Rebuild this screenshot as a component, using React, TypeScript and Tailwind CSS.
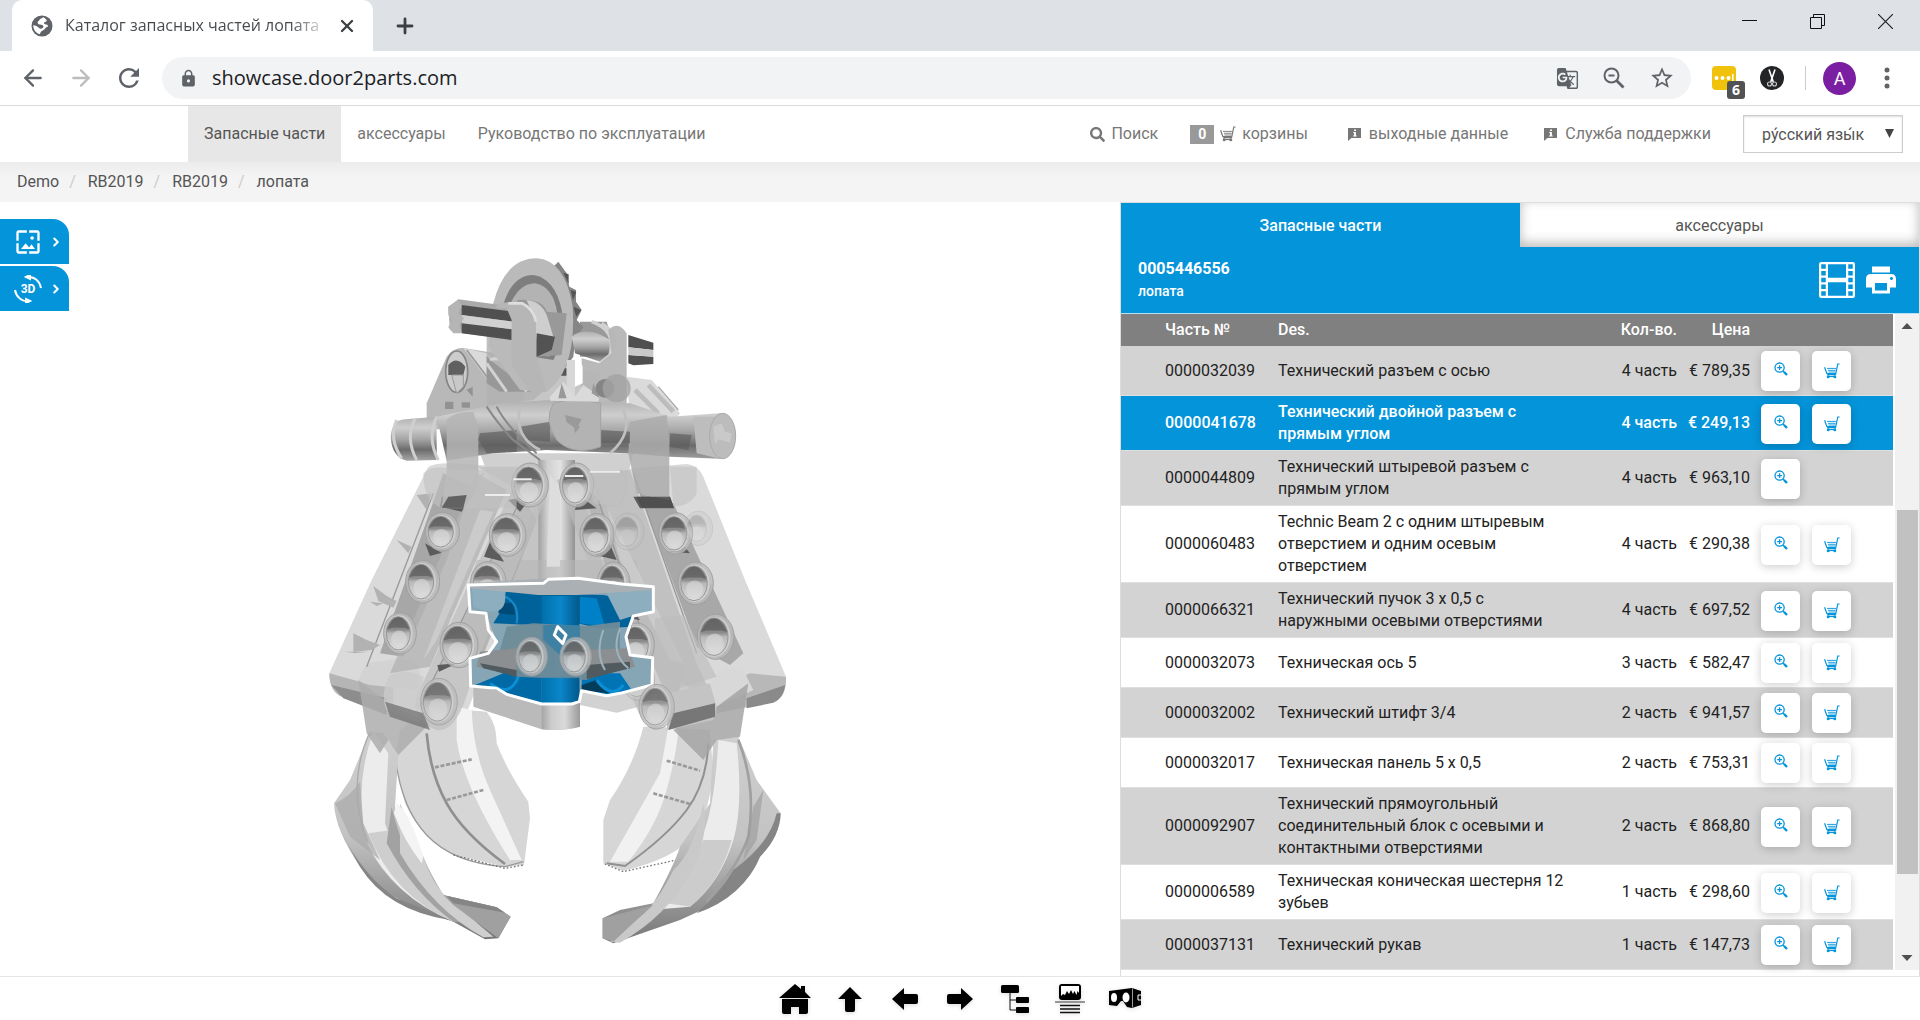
import type { ReactNode } from 'react'
import { ArrowLeft, ArrowRight, ChevronRight, Plus, X } from 'lucide-react'
import { BsFilm } from 'react-icons/bs'
import { FaSearch } from 'react-icons/fa'
import { MdGTranslate, MdLock, MdPrint, MdRefresh, MdStarBorder, MdWallpaper } from 'react-icons/md'

type Part = {
  number: string
  name: string
  qty: number
  price: string
  selected?: boolean
  noCart?: boolean
}

const parts: Part[] = [
  { number: '0000032039', name: 'Технический разъем с осью', qty: 4, price: '789,35' },
  { number: '0000041678', name: 'Технический двойной разъем с прямым углом', qty: 4, price: '249,13', selected: true },
  { number: '0000044809', name: 'Технический штыревой разъем с прямым углом', qty: 4, price: '963,10', noCart: true },
  { number: '0000060483', name: 'Technic Beam 2 с одним штыревым отверстием и одним осевым отверстием', qty: 4, price: '290,38' },
  { number: '0000066321', name: 'Технический пучок 3 x 0,5 с наружными осевыми отверстиями', qty: 4, price: '697,52' },
  { number: '0000032073', name: 'Техническая ось 5', qty: 3, price: '582,47' },
  { number: '0000032002', name: 'Технический штифт 3/4', qty: 2, price: '941,57' },
  { number: '0000032017', name: 'Техническая панель 5 x 0,5', qty: 2, price: '753,31' },
  { number: '0000092907', name: 'Технический прямоугольный соединительный блок с осевыми и контактными отверстиями', qty: 2, price: '868,80' },
  { number: '0000006589', name: 'Техническая коническая шестерня 12 зубьев', qty: 1, price: '298,60' },
  { number: '0000037131', name: 'Технический рукав', qty: 1, price: '147,73' },
]

const crumbs = ['Demo', 'RB2019', 'RB2019', 'лопата']

function CartIcon({ className }: { className?: string }) {
  return (
    <svg className={className} viewBox="0 0 16 16" fill="none" stroke="currentColor">
      <path d="M15.6 1h-1.8l-2.2 10.4H3.2" strokeWidth="1.2" />
      <path d="M.6 4.2l2.2 6.3h8.6" strokeWidth="1.2" />
      <path d="M3 5.4h9M4 7.3h7.6M4.4 9h7" strokeWidth=".9" />
      <path d="M3 13.4h9" strokeWidth="1.4" />
      <circle cx="4.2" cy="13.8" r="1.5" fill="currentColor" stroke="none" />
      <circle cx="10.8" cy="13.8" r="1.5" fill="currentColor" stroke="none" />
    </svg>
  )
}

function ZoomInIcon({ className }: { className?: string }) {
  return (
    <svg className={className} viewBox="0 0 14 14" fill="none" stroke="currentColor">
      <circle cx="5.6" cy="5.6" r="4.6" strokeWidth="1.3" />
      <path d="M5.6 3.2v4.8M3.2 5.6h4.8" strokeWidth="1.3" />
      <path d="M9 9l1.4 1.4" strokeWidth="1.3" />
      <path d="M10 10l3 3" strokeWidth="2.4" />
    </svg>
  )
}

function InfoIcon() {
  return (
    <svg className="h-[13px] w-[13px]" viewBox="0 0 13 13">
      <path d="M0 0h13v10H3.4L0 13z" fill="#777" />
      <path d="M6 1.6h2v1.5H6zM5.2 4h2.7v3.5h.8v1.1H5.1V7.5H6V5.1h-.8z" fill="#fff" />
    </svg>
  )
}

function GlobeIcon() {
  return (
    <svg className="h-[22px] w-[22px] shrink-0" viewBox="0 0 22 22">
      <circle cx="11" cy="11" r="10.5" fill="#5f6368" />
      <path d="M12.5 2.2C10.5 3 8.500 4 8.200 5.600 7 6 6.500 7 6.700 8.300c.8 1.700 3.300 1.200 4.600 1.700 1.200.6 1.500 2 .4 3-1.500 1.200-3 .7-4.200-.6C6 10.800 4 10.300 2.200 10.200c0 4.100 2.600 7.900 6.700 9.100.5-2 1.100-3.200 2.900-3.900 2-.8 2.200-2.200 3.500-3.200 1-.7 2-.4 1.600-1.800-.6-1.500-2.700-.7-3.700-1.700-.7-.9.300-1.800 1.500-1.900 1.100-.2 1.300-1.400.5-2.200-.7-.800-1.700-2-2.700-2.400z" fill="#fff" />
    </svg>
  )
}

function BrowserChrome() {
  return (
    <header className="font-['Open_Sans','Noto_Sans',sans-serif]">
      <div className="flex h-[51px] bg-[#dee1e6] pl-3">
        <div className="flex w-[361px] items-center rounded-t-[10px] bg-white pl-[19px] pr-4">
          <GlobeIcon />
          <span className="ml-3 w-[264px] overflow-hidden whitespace-nowrap bg-gradient-to-r from-[#45494d] from-85% to-white bg-clip-text pb-px text-base text-transparent">
            Каталог запасных частей лопата
          </span>
          <button aria-label="Закрыть вкладку" className="ml-2 text-[#3c4043]">
            <X size={20} strokeWidth={2.8} />
          </button>
        </div>
        <button aria-label="Новая вкладка" className="ml-5 text-[#3c4043]">
          <Plus size={24} strokeWidth={2.8} />
        </button>
        <div className="ml-auto flex gap-[53px] pr-[27px] pt-[14px]">
          <button aria-label="Свернуть" className="h-[15px]">
            <svg className="h-[15px] w-[15px]" viewBox="0 0 15 15"><path d="M0 6.500h15" stroke="#111" /></svg>
          </button>
          <button aria-label="Восстановить" className="h-[15px]">
            <svg className="h-[15px] w-[15px]" viewBox="0 0 15 15" fill="none" stroke="#111">
              <path d="M.5 3.500h11v11H.5zM3.500 3.500v-3h11v11h-3" />
            </svg>
          </button>
          <button aria-label="Закрыть" className="h-[15px]">
            <svg className="h-[15px] w-[15px]" viewBox="0 0 15 15"><path d="M0 0l15 15M15 0L0 15" stroke="#222" strokeWidth="1.200" /></svg>
          </button>
        </div>
      </div>
      <div className="flex h-[55px] items-center border-b border-[#d8d9db] bg-white pl-5 pr-[30px] text-[#5f6368]">
        <button aria-label="Назад"><ArrowLeft size={26} strokeWidth={2.2} /></button>
        <button aria-label="Вперёд" className="ml-[22px] text-[#bbbdbf]"><ArrowRight size={26} strokeWidth={2.2} /></button>
        <button aria-label="Обновить" className="ml-5"><MdRefresh size={30} /></button>
        <div className="ml-[18px] flex h-[42px] flex-1 items-center rounded-full bg-[#f1f3f4] pl-[17px] pr-4">
          <MdLock size={19} />
          <input
            aria-label="Адрес"
            defaultValue="showcase.door2parts.com"
            className="ml-[14px] flex-1 bg-transparent text-[20px] text-[#202124] outline-none"
          />
          <div className="flex items-center gap-[23px]">
            <button aria-label="Перевести"><MdGTranslate size={23} /></button>
            <button aria-label="Масштаб">
              <svg className="h-6 w-6" viewBox="0 0 24 24" fill="none" stroke="currentColor">
                <circle cx="9.500" cy="9.500" r="7" strokeWidth="2" />
                <path d="M6.500 9.500h6" strokeWidth="2" />
                <path d="M14.500 14.500l7 7" strokeWidth="2.800" />
              </svg>
            </button>
            <button aria-label="В закладки"><MdStarBorder size={26} /></button>
          </div>
        </div>
        <button aria-label="Расширение" className="relative ml-[21px] h-6 w-6 rounded-sm bg-[#f0c20c]">
          <svg className="h-6 w-6" viewBox="0 0 24 24" fill="#fff">
            <circle cx="4.500" cy="12" r="2" />
            <circle cx="10.500" cy="12" r="2" />
            <circle cx="16.500" cy="12" r="2" />
            <path d="M20 8h1.500v8H20z" />
          </svg>
          <span className="absolute left-[15px] top-[15px] h-[18px] w-[18px] rounded-[3px] bg-[#505254] text-center text-sm/[18px] font-bold text-white">6</span>
        </button>
        <button aria-label="Ножницы" className="ml-6">
          <svg className="h-6 w-6" viewBox="0 0 24 24">
            <circle cx="12" cy="12" r="12" fill="#222426" />
            <path d="M9 3.500l4.300 12.500M15 3.500L10.700 16" stroke="#fff" strokeWidth="1.600" />
            <circle cx="9.500" cy="18" r="2" fill="none" stroke="#ccc" strokeWidth="1.100" />
            <circle cx="14.500" cy="18" r="2" fill="none" stroke="#ccc" strokeWidth="1.100" />
          </svg>
        </button>
        <span className="ml-[21px] h-6 w-px bg-[#cbcdd0]" />
        <button className="ml-[17px] h-[33px] w-[33px] rounded-full bg-[#7b1fa2] text-center font-[Roboto,sans-serif] text-lg/[33px] text-white">A</button>
        <button aria-label="Меню" className="ml-7">
          <svg className="h-[22px] w-[6px]" viewBox="0 0 6 22" fill="#5f6368">
            <circle cx="3" cy="3" r="2.500" />
            <circle cx="3" cy="11" r="2.500" />
            <circle cx="3" cy="19" r="2.500" />
          </svg>
        </button>
      </div>
    </header>
  )
}

function SiteNav() {
  return (
    <nav className="flex h-14 items-stretch bg-white pl-[188px] pr-[17px] text-[#777]">
      <a href="#parts" className="flex items-center bg-[#e7e7e7] px-4 text-[#555]">Запасные части</a>
      <a href="#accessories" className="flex items-center px-4">аксессуары</a>
      <a href="#manual" className="flex items-center px-4">Руководство по эксплуатации</a>
      <div className="ml-auto flex items-center">
        <a href="#search" className="mr-8 flex items-center gap-[6px]"><FaSearch size={15} />Поиск</a>
        <a href="#cart" className="mr-10 flex items-center gap-[6px]">
          <span className="h-[19px] w-6 bg-[#999] text-center text-sm/[19px] font-bold text-white">0</span>
          <CartIcon className="h-4 w-4" />
          корзины
        </a>
        <a href="#imprint" className="mr-9 flex items-center gap-2"><InfoIcon />выходные данные</a>
        <a href="#support" className="mr-8 flex items-center gap-2"><InfoIcon />Служба поддержки</a>
        <div className="relative">
          <select aria-label="Язык" className="h-[38px] w-40 appearance-none border border-[#ccc] bg-white pl-[18px] pt-px text-[#555] shadow-[inset_0_1px_2px_#ddd]">
            <option>ру́сский язы́к</option>
          </select>
          <svg className="pointer-events-none absolute right-[9px] top-[14px] h-[9px] w-[9px]" viewBox="0 0 9 9"><path d="M0 0h9L4.500 9z" fill="#444" /></svg>
        </div>
      </div>
    </nav>
  )
}

function Breadcrumbs() {
  return (
    <div className="flex h-10 items-center bg-gradient-to-b from-[#ececec] to-[#f4f4f4] to-40% pl-[17px] text-[#555]">
      {crumbs.map((crumb, i) => (
        <span key={i}>
          {i > 0 && <span className="pl-[10px] pr-3 text-[#ccc]">/</span>}
          <a href="#crumb">{crumb}</a>
        </span>
      ))}
    </div>
  )
}

function Hole({ x, y, rx = 38, ry = 52, o = 1 }: { x: number; y: number; rx?: number; ry?: number; o?: number }) {
  return (
    <g opacity={o}>
      <ellipse cx={x + 5} cy={y} rx={rx + 13} ry={ry + 12} fill="#bcbcbc" fillOpacity=".8" stroke="#a0a0a0" strokeWidth="3" />
      <ellipse cx={x + 3} cy={y} rx={rx + 4} ry={ry + 4} fill="#cfcfcf" />
      <ellipse cx={x} cy={y} rx={rx} ry={ry} fill="url(#bore)" stroke="#969696" strokeWidth="3" />
      <path d={`M${x - rx + 2} ${y - ry / 4}Q${x} ${y - ry * 1.7} ${x + rx - 2} ${y - ry / 4}L${x + rx / 2} ${y - ry / 3}H${x - rx / 2}z`} fill="#5d5d5d" opacity=".7" />
      <ellipse cx={x + 2} cy={y + ry / 3} rx={rx * 0.65} ry={ry * 0.5} fill="#dedede" opacity=".55" />
    </g>
  )
}

function GrabberModel() {
  return (
    <svg className="h-[720px] w-[480px] overflow-visible" viewBox="0 0 1440 2160" role="img" aria-label="лопата">
      <defs>
        <linearGradient id="bore" x1="0" y1="0" x2="0" y2="1">
          <stop offset="0" stopColor="#747474" />
          <stop offset=".4" stopColor="#8c8c8c" />
          <stop offset=".5" stopColor="#b8b8b8" />
          <stop offset="1" stopColor="#dedede" />
        </linearGradient>
        <linearGradient id="tube" x1="0" y1="0" x2="0" y2="1">
          <stop offset="0" stopColor="#b0b0b0" />
          <stop offset=".25" stopColor="#cecece" />
          <stop offset=".5" stopColor="#a8a8a8" />
          <stop offset=".75" stopColor="#6c6c6c" />
          <stop offset="1" stopColor="#a6a6a6" />
        </linearGradient>
        <linearGradient id="post" x1="0" y1="0" x2="1" y2="0">
          <stop offset="0" stopColor="#a0a0a0" />
          <stop offset=".25" stopColor="#d0d0d0" />
          <stop offset=".6" stopColor="#e2e2e2" />
          <stop offset="1" stopColor="#929292" />
        </linearGradient>
        <linearGradient id="bluePost" x1="0" y1="0" x2="1" y2="0">
          <stop offset="0" stopColor="#0070ab" />
          <stop offset=".5" stopColor="#0a86c9" />
          <stop offset="1" stopColor="#00598c" />
        </linearGradient>
        <linearGradient id="clawShade" x1="0" y1="0" x2="0" y2="1">
          <stop offset="0" stopColor="#cfcfcf" />
          <stop offset=".5" stopColor="#c3c3c3" />
          <stop offset="1" stopColor="#777" />
        </linearGradient>
      </defs>

      {/* outer plates */}
      <path d="M325 680Q350 668 400 670L720 690 440 1420 200 1400 60 1368Q28 1350 28 1300L155 1020z" fill="#dadada" />
      <path d="M1100 672Q1135 676 1150 710L1275 1020 1398 1310Q1400 1360 1360 1385L1190 1400 960 1240 760 700z" fill="#dadada" />
      <path d="M28 1300L120 1325 220 1340V1420L60 1368Q28 1350 28 1300z" fill="#b5b5b5" />
      <path d="M34 1335L200 1375V1425L70 1375z" fill="#8d8d8d" />
      <path d="M1398 1310L1290 1300 1190 1345V1420L1365 1385Q1400 1370 1398 1310z" fill="#b8b8b8" />
      <path d="M1396 1335L1280 1375V1405L1360 1388Q1390 1375 1396 1335z" fill="#8a8a8a" />
      <path d="M115 1325Q130 1260 180 1265 290 1240 300 1300L290 1350 150 1335z" fill="#d3d3d3" />
      <path d="M1175 1330Q1200 1265 1270 1290L1300 1350 1190 1400z" fill="#d8d8d8" />

      {/* inner claws */}
      <path d="M330 1400L500 1415Q530 1450 530 1510 560 1590 625 1685L630 1735 612 1875 555 1880 400 1845Q300 1790 255 1690L225 1560 240 1470z" fill="#d6d6d6" />
      <path d="M410 1400L455 1410Q460 1540 510 1650L605 1860 570 1860Q430 1640 410 1500z" fill="#f3f3f3" />
      <path d="M320 1480Q330 1600 380 1690T555 1872" fill="none" stroke="#8f8f8f" strokeWidth="8" />
      <path d="M225 1540Q240 1700 320 1785T555 1880l55-15" fill="none" stroke="#999" strokeWidth="4" />
      <path d="M345 1582L455 1558M380 1680L490 1650" stroke="#999" strokeWidth="8" strokeDasharray="12 5" />
      <path d="M1010 1460L1170 1470 1180 1600Q1170 1700 1130 1780 1060 1860 910 1892L850 1870 850 1740 870 1680Q940 1580 970 1460z" fill="#d6d6d6" />
      <path d="M1045 1460L1020 1600 870 1865 925 1865Q1010 1760 1040 1650T1075 1470z" fill="#f1f1f1" />
      <path d="M1165 1510Q1160 1630 1100 1710T915 1878l-55-8" fill="none" stroke="#909090" strokeWidth="6" />
      <path d="M1040 1562L1140 1592M1000 1660L1110 1692" stroke="#999" strokeWidth="8" strokeDasharray="12 5" />
      <path d="M400 1845L555 1885 612 1875M1060 1862L910 1895 850 1870" fill="none" stroke="#777" strokeWidth="4" strokeDasharray="5 6" />

      {/* outer claws */}
      <path d="M150 1475L90 1620 42 1690Q45 1770 120 1880 190 1980 400 2045L495 2098 535 2095 572 2030 530 2002 370 1965Q330 1900 310 1850L225 1700 235 1540 190 1480z" fill="url(#clawShade)" />
      <path d="M160 1475L205 1540 195 1750Q220 1830 300 1920L400 2045Q220 1970 140 1810 100 1640 160 1475z" fill="#ececec" />
      <path d="M145 1780L215 1770 240 1830 320 1960 400 2045Q220 1970 145 1780z" fill="#c2c2c2" opacity=".7" />
      <path d="M215 1700Q245 1830 300 1900L400 1990 480 2050 400 2045Q280 1960 200 1810z" fill="#a2a2a2" />
      <path d="M240 1690L310 1850Q345 1950 400 1990L520 2090 490 2092Q340 2010 240 1840z" fill="#cfcfcf" />
      <path d="M230 1690Q270 1720 310 1850L305 1870Q250 1800 222 1720z" fill="#f4f4f4" />
      <path d="M370 1965L530 2002 572 2030 535 2095 400 1995z" fill="#a0a0a0" />
      <path d="M380 1968L530 2002 555 2018 400 1990z" fill="#858585" />
      <path d="M60 1770Q130 1910 230 1975L390 2040Q200 2010 120 1880z" fill="#858585" />
      <path d="M45 1690Q90 1670 120 1625L130 1750 180 1860 90 1790z" fill="#aaa" opacity=".7" />
      <path d="M150 1475Q75 1640 145 1810" fill="none" stroke="#aaa" strokeWidth="4" />
      <path d="M1255 1490L1310 1620 1382 1720Q1380 1790 1320 1850 1290 1930 1190 1990L1080 2040 880 2110 848 2095V2035L900 2010 1000 1990Q1060 1880 1080 1820L1170 1690 1180 1500z" fill="url(#clawShade)" />
      <path d="M1195 1500L1250 1510Q1270 1700 1240 1800 1200 1930 1110 2000L990 2010Q1120 1920 1150 1780 1185 1690 1195 1500z" fill="#ececec" />
      <path d="M1235 1800L1150 1800Q1110 1900 1040 1990L1110 2000Q1200 1930 1235 1800z" fill="#bcbcbc" opacity=".65" />
      <path d="M1150 1690Q1120 1840 1060 1890 1010 1990 960 2030L870 2105 900 2108Q1040 2030 1110 1900 1170 1790 1150 1690z" fill="#c9c9c9" />
      <path d="M848 2035L1000 1995 960 2030 880 2105 848 2095z" fill="#a0a0a0" />
      <path d="M1370 1720Q1350 1810 1240 1890 1200 1960 1130 2020 1270 1970 1320 1850 1380 1790 1382 1720z" fill="#858585" />
      <path d="M1255 1500Q1310 1640 1285 1790 1260 1870 1160 1985" fill="none" stroke="#a0a0a0" strokeWidth="8" />
      <path d="M1300 1700L1330 1650 1310 1800 1270 1860z" fill="#999" opacity=".6" />

      {/* claw sockets */}
      <path d="M115 1320L220 1400 330 1450 235 1545 205 1500 180 1540 140 1480z" fill="#adadad" opacity=".85" />
      <path d="M1285 1330L1190 1400 1060 1470 1150 1560 1190 1500 1260 1490z" fill="#a5a5a5" opacity=".85" />

      {/* centre column and rear block */}
      <path d="M460 1320H780V1460Q720 1475 665 1468L460 1400z" fill="#bababa" />
      <path d="M665 1380H780V1460Q720 1475 665 1468z" fill="url(#post)" opacity=".8" />
      <path d="M780 1330H995V1390L890 1418 780 1395z" fill="#d2d2d2" />
      <path d="M480 640H940L900 800H540z" fill="#d0d0d0" />
      <path d="M640 800H800L870 1050H570z" fill="#c4c4c4" />
      <path d="M655 660H765V1050H655z" fill="url(#post)" />
      <path d="M470 960H950L960 1060H440z" fill="#b8b8b8" opacity=".6" />
      <path d="M690 700L720 760V980H680z" fill="#ddd" />

      {/* dark recesses behind the arms */}
      <path d="M370 700L455 740 380 960 250 1250 180 1240z" fill="#969696" opacity=".75" />
      <path d="M610 770L650 840 480 1270 360 1280z" fill="#a4a4a4" opacity=".7" />
      <path d="M960 760L1060 790 1270 1240 1230 1275 1130 1220z" fill="#979797" opacity=".75" />
      <path d="M790 740L830 770 960 1130 930 1250z" fill="#969696" opacity=".8" />

      {/* perforated arms */}
      <path d="M470 680L650 680 680 770 460 1290Q420 1480 350 1470 270 1440 290 1370L580 740z" fill="#bfbfbf" opacity=".75" />
      <path d="M470 700L560 750 330 1280 210 1300z" fill="#b4b4b4" opacity=".8" />
      <path d="M710 720L810 690 1090 1290Q1060 1470 1000 1470 930 1420 930 1290z" fill="#bcbcbc" opacity=".7" />
      <path d="M930 690L1130 1270 1190 1400 1060 1420 940 1130 810 700z" fill="#b8b8b8" opacity=".75" />
      <path d="M480 810L520 815 350 1200 310 1260z" fill="#d2d2d2" opacity=".7" />
      <path d="M860 800L900 960 1050 1260 1090 1270z" fill="#d5d5d5" opacity=".6" />
      <path d="M620 740L300 1400M835 780L960 1160M940 700L1130 1240M340 760L140 1280" stroke="#999" strokeWidth="4" />
      <path d="M365 770H450L425 815 360 800zM315 910l50 28-35 10zM512 900l-20 50 60 15zM565 780l75-15-40 50zM352 1275l60-5-55 25z" fill="#5c5c5c" />
      <path d="M940 770H1050L1062 805H960zM1070 890l40 50-60-5zM862 895l28 65-65-15zM775 765l55 40-65 5zM960 1140l-60-10 35-25z" fill="#5c5c5c" />
      <Hole x={625} y={735} rx={42} ry={54} />
      <Hole x={765} y={735} rx={38} ry={54} />
      <Hole x={362} y={875} rx={38} ry={46} />
      <Hole x={558} y={885} rx={42} ry={52} />
      <Hole x={826} y={885} rx={38} ry={52} />
      <Hole x={1062} y={880} rx={38} ry={50} />
      <Hole x={920} y={875} rx={34} ry={44} o={0.35} />
      <Hole x={1130} y={865} rx={30} ry={40} o={0.3} />
      <Hole x={303} y={1025} rx={38} ry={52} />
      <Hole x={500} y={1025} rx={40} ry={48} />
      <Hole x={876} y={1030} rx={36} ry={52} />
      <Hole x={1122} y={1030} rx={40} ry={52} />
      <Hole x={235} y={1180} rx={36} ry={50} />
      <Hole x={412} y={1215} rx={44} ry={56} />
      <Hole x={1182} y={1190} rx={42} ry={56} />
      <Hole x={945} y={1215} rx={40} ry={54} />
      <Hole x={950} y={1320} rx={36} ry={50} o={0.5} />
      <path d="M160 1038l40 30 30 15-10 20-45-20zM150 1085l40 5-20 8zM100 1180l40 20 40 15-25 15-55 5zM75 1235l70 0-40 5zM290 765l45-5-15 50zM230 900l45 20-10 20z" fill="#b2b2b2" />

      {/* selected connector */}
      <path d="M445 1035L670 1030 685 1018 775 1015 1000 1040V1115L940 1128 918 1190 930 1245 998 1253 996 1335 860 1367 785 1352 778 1385 755 1392H665L530 1345 452 1338 450 1255 505 1240 530 1205 498 1120 450 1115z" fill="#86a5b5" />
      <path d="M560 1045L640 1040V1060L850 1065 930 1080 935 1160 840 1165 770 1150 640 1155 520 1150 545 1110z" fill="#00629a" />
      <path d="M780 1070L830 1075 855 1160 780 1150z" fill="#0080c6" />
      <path d="M665 1068H778V1390H665z" fill="url(#bluePost)" />
      <path d="M470 1275L665 1300V1390L530 1350 465 1335 550 1300z" fill="#006aa6" />
      <path d="M785 1300L900 1300 935 1350 860 1365 785 1352z" fill="#0074b5" />
      <path d="M785 1335L830 1320 870 1360 785 1352z" fill="#043d5c" />
      <path d="M540 1090h40l5 35-50-5z" fill="#004a75" />
      <path d="M555 1070Q600 1090 590 1150" fill="none" stroke="#1a87c4" strokeWidth="7" />
      <path d="M510 1330Q570 1375 595 1310M830 1320Q875 1380 910 1335" fill="none" stroke="#0b8fd5" strokeWidth="9" />
      <path d="M460 1100Q580 1150 550 1030L455 1035zM850 1040L900 1140 995 1110V1040z" fill="#8caebf" />
      <path d="M450 1030L680 1015 775 1015 1000 1038V1050L770 1065H655L450 1045z" fill="#aab0b3" />
      <path d="M560 1160L640 1150 800 1158 900 1145 900 1280 800 1320 590 1310 500 1280 540 1230z" fill="#6f8b99" opacity=".95" />
      <path d="M670 1155h110v45L725 1250 670 1200z" fill="#357ea5" opacity=".8" />
      <path d="M480 1235L590 1225V1305L470 1280zM800 1230L925 1225 945 1280 800 1315z" fill="#8b8f91" />
      <path d="M480 1270L590 1290V1310L490 1285zM800 1275L930 1265 930 1285 800 1318z" fill="#515a5f" />
      <Hole x={630} y={1250} rx={34} ry={46} o={0.9} />
      <Hole x={762} y={1250} rx={34} ry={46} o={0.9} />
      <path d="M850 1170Q825 1240 855 1290M900 1165Q870 1240 925 1285" fill="none" stroke="#9db3bd" strokeWidth="6" />
      <path d="M665 1313H778V1388H665z" fill="url(#bluePost)" opacity=".9" />
      <path d="M445 1035L670 1030 685 1018 775 1015 905 1032 1000 1040V1115L940 1128 918 1190 930 1245 998 1253 996 1335 900 1360 860 1367 785 1352 778 1385 755 1392H665L560 1363 530 1345 452 1338 450 1255 505 1240 530 1205 505 1170 498 1120 450 1115zM713 1160l-10 25 25 25 10-25z" fill="none" stroke="#fff" strokeWidth="9" strokeLinejoin="round" />

      {/* lower pivots */}
      <path d="M205 1310Q250 1280 310 1310L300 1450 200 1410Q180 1370 205 1310z" fill="#cacaca" opacity=".8" />
      <path d="M195 1385L310 1420 330 1470 210 1430z" fill="#777" opacity=".8" />
      <path d="M1050 1360L1170 1330 1190 1400 1180 1440 1040 1470z" fill="#c4c4c4" />
      <path d="M1060 1420L1185 1390V1430L1045 1470z" fill="#777" />
      <Hole x={352} y={1385} rx={42} ry={58} o={0.85} />
      <Hole x={1005} y={1400} rx={40} ry={55} o={0.85} />
      <path d="M1005 1135L1090 1125 1190 1310 1060 1350 1005 1290z" fill="#bdbdbd" opacity=".65" />

      {/* upper side brackets */}
      <path d="M320 490L380 350Q400 322 430 324L560 345 640 455 640 520 460 560 320 570z" fill="#b8b8b8" />
      <path d="M430 324L500 340 620 455H530z" fill="#dadada" />
      <path d="M440 330L535 455M500 350L570 450" stroke="#999" strokeWidth="5" />
      <ellipse cx="410" cy="395" rx="33" ry="62" fill="#ccc" stroke="#858585" strokeWidth="5" />
      <path d="M385 375Q410 345 436 380L430 405H385z" fill="#606060" />
      <path d="M395 405H430V440L410 460z" fill="#c8c8c8" stroke="#999" strokeWidth="3" />
      <path d="M375 485h25v22h-25zM425 487h25v16h-25zM440 450l18-10v30z" fill="#929292" />
      <path d="M920 410L995 420 1080 520 1050 560 930 530z" fill="#dadada" />
      <path d="M945 450L1015 520M985 435L1060 515" stroke="#bcbcbc" strokeWidth="14" />
      <path d="M1015 440L1075 510" stroke="#aaa" strokeWidth="4" />
      <path d="M640 400L740 380 840 400 840 500H600z" fill="#c6c6c6" />

      {/* rear bracket, axle and gear */}
      <path d="M500 290L570 240 650 345 740 355 720 410 640 480 500 500z" fill="#b2b2b2" opacity=".8" />
      <path d="M500 350L550 390 640 455H540L500 430z" fill="#989898" />
      <path d="M510 360Q540 345 565 385L620 455M500 370L560 455" fill="none" stroke="#d2d2d2" strokeWidth="9" />
      <path d="M780 245L860 245 880 310 870 350 780 350z" fill="#999" />
      <path d="M925 285L1000 308V330L925 322zM925 345L1000 350V372L940 376 925 370z" fill="#4f4f4f" />
      <path d="M925 322L1000 330V350L925 345z" fill="#c9c9c9" />
      <path d="M715 65L740 100 748 140 768 150 768 185 785 210 770 240 790 260 765 300 760 350 720 405 680 300 690 90z" fill="#858585" />
      <path d="M730 98l16 5v28zM752 150l17 5-10 25zM760 200l24 10-15 20zM725 385l15 0v22l-22 0z" fill="#555" />
      <path d="M520 190Q555 55 650 55 735 60 758 200 770 390 680 455L600 450 505 320z" fill="#bababa" />
      <path d="M548 200Q575 105 640 105 705 115 725 210 735 300 700 360L640 350 560 280z" fill="#7e7e7e" />
      <path d="M565 205Q595 130 645 130 700 140 712 220 725 310 685 350L600 320z" fill="#b3b3b3" />
      <path d="M590 180Q670 175 680 215L740 220 725 345 650 350 630 240z" fill="#999" />
      <path d="M620 180Q670 185 685 240L700 290 655 330 640 230z" fill="#cecece" />
      <path d="M650 280L705 290 695 330 650 350z" fill="#535353" />
      <path d="M385 200L400 190 415 178 580 200V300L430 280 390 270z" fill="#aaa" />
      <path d="M425 195L580 215V245L425 225zM425 245L575 268V300L425 280z" fill="#505050" />
      <path d="M425 225L580 245V268L425 250z" fill="#d1d1d1" />
      <path d="M385 200L400 190 415 180 425 198 415 220 432 235 418 255 425 280 400 280 385 262 395 240 385 225z" fill="#b5b5b5" />
      <path d="M525 205Q535 185 570 187H610Q640 210 648 240V345L680 455 630 455 575 375V240L560 205z" fill="#b6b6b6" />
      <path d="M565 190H605Q640 205 648 245" fill="none" stroke="#dedede" strokeWidth="8" />
      <path d="M755 290Q800 255 870 300V350L840 365 765 340z" fill="url(#tube)" />
      <path d="M815 245Q890 270 870 345L840 370M845 250Q905 285 870 350" fill="none" stroke="#d1d1d1" strokeWidth="10" />
      <path d="M865 270Q895 240 920 280V490H785V355L840 370 875 340z" fill="#b5b5b5" opacity=".95" />
      <path d="M755 365Q775 345 788 380V430L765 440V370z" fill="#fff" />
      <path d="M740 360H765V480H740z" fill="#d6d6d6" />

      {/* cross tube */}
      <path d="M212 590Q215 540 255 538L350 530V660L260 662Q215 650 212 590z" fill="url(#tube)" />
      <path d="M230 540Q205 595 245 655M285 537Q255 595 290 660M350 530Q320 595 355 660" fill="none" stroke="#cfcfcf" strokeWidth="9" />
      <path d="M350 530L540 490 690 480 930 490 1050 530 1200 520Q1248 535 1247 590 1240 655 1200 656L1050 650 920 640 680 630 520 640 380 662z" fill="url(#tube)" />
      <path d="M380 540Q400 515 460 515L475 560V740L440 800 365 800 380 700z" fill="#b4b4b4" opacity=".85" />
      <path d="M930 545L1040 525 1048 600V780L950 760 925 640z" fill="#acacac" opacity=".85" />
      <path d="M1120 530H1200Q1248 540 1247 590 1240 655 1200 656L1130 640z" fill="#bdbdbd" />
      <ellipse cx="1208" cy="588" rx="39" ry="68" fill="#bcbcbc" stroke="#aaa" strokeWidth="3" />
      <path d="M1180 560l25-10 10 25 20 5-5 28-35-10-10 15z" fill="#c9c9c9" />
      <path d="M600 560L690 545V605L610 600zM840 570L930 575V610H840zM1050 580L1115 585 1105 630 1050 620zM480 580L590 570V635L500 640 475 600z" fill="#5c5c5c" opacity=".65" />
      <path d="M500 500Q540 560 580 600L660 660M530 500Q560 560 650 640" fill="none" stroke="#888" strokeWidth="6" />
      <path d="M600 500Q580 590 660 630M910 510Q940 580 870 640" fill="none" stroke="#c0c0c0" strokeWidth="8" />
      <path d="M700 490Q760 470 842 490V620Q760 650 710 600 670 540 700 490z" fill="#b3b3b3" stroke="#a4a4a4" strokeWidth="3" />
      <path d="M735 525l50 12-15 30-30-20zM760 550l20 10-15 20z" fill="#9a9a9a" />
      <path d="M690 470L730 425 765 470 790 435 840 470 835 485 690 482z" fill="#dadada" />
      <path d="M725 430l-10 45h25zM820 430l20 45-25-15z" fill="#999" />
      <circle cx="855" cy="445" r="28" fill="#858585" />
      <circle cx="890" cy="445" r="42" fill="#a2a2a2" opacity=".8" />
      <path d="M310 700Q340 670 400 690H590V805H370Q310 790 310 700zM800 690H920Q940 740 920 800L820 790zM1050 680H1130V760Q1110 800 1060 800z" fill="#c2c2c2" opacity=".6" />
      <path d="M490 700Q460 740 500 775M900 690Q940 740 900 790" fill="none" stroke="#bebebe" strokeWidth="5" />
      <path d="M580 718H635M735 708H790M495 765H570M810 695H900" stroke="#ececec" strokeWidth="6" />
      <path d="M950 770H1050L1062 803H965zM385 770L440 765 430 803H365z" fill="#4c4c4c" opacity=".8" />
    </svg>
  )
}

function Viewer() {
  return (
    <section className="flex min-w-0 flex-1 items-start bg-white">
      <div className="flex w-[69px] flex-col gap-[2px] pt-[17px]">
        <button aria-label="Изображение" className="flex h-[45px] items-center rounded-tr-[16px] bg-[#0494da] pl-[14px] text-white">
          <MdWallpaper size={28} />
          <ChevronRight className="ml-[7px]" size={14} strokeWidth={3.5} />
        </button>
        <button aria-label="3D" className="flex h-[45px] items-center rounded-tr-[16px] bg-[#0494da] pl-[14px] text-white">
          <svg className="h-7 w-7" viewBox="0 0 28 28" fill="none" stroke="#fff" strokeWidth="2">
            <path d="M13 2c8-1 13 5 14 11M15 26C7 27 2 21 1 15" />
            <path d="M12 2l4-2v4zM16 26l-4-2v4z" fill="#fff" />
            <text x="14" y="18" textAnchor="middle" fontFamily="Roboto, sans-serif" fontSize="12" fontWeight="700" fill="#fff" stroke="none">3D</text>
          </svg>
          <ChevronRight className="ml-[7px]" size={14} strokeWidth={3.5} />
        </button>
      </div>
      <div className="flex flex-1 justify-center pr-[69px] pt-[38px]">
        <GrabberModel />
      </div>
    </section>
  )
}

function RowButton({ label, children }: { label: string; children: ReactNode }) {
  return (
    <button aria-label={label} className="flex h-10 w-[39px] items-center justify-center rounded-[5px] bg-white pb-1 text-[#0494da] shadow-[0_2px_10px_rgba(0,0,0,0.2)]">
      {children}
    </button>
  )
}

function PartsTable() {
  return (
    <table className="w-full table-fixed border-collapse text-left text-[#222]">
      <colgroup>
        <col className="w-[157px]" />
        <col className="w-[286px]" />
        <col />
        <col className="w-[73px]" />
        <col className="w-[143px]" />
      </colgroup>
      <thead>
        <tr className="h-8 bg-[#808080] text-white">
          <th className="pl-11 font-medium">Часть №</th>
          <th className="font-medium">Des.</th>
          <th className="text-right font-medium">Кол-во.</th>
          <th className="text-right font-medium">Цена</th>
          <th aria-label="Действия" />
        </tr>
      </thead>
      <tbody>
        {parts.map((part, i) => (
          <tr
            key={part.number}
            className={`border-b border-[#dfdfdf] ${
              part.selected ? 'bg-[#0494da] font-medium text-white' : i % 2 === 0 ? 'bg-[#d3d3d3]' : 'bg-white'
            }`}
          >
            <td className="pl-11">{part.number}</td>
            <td className="py-[5px] leading-[22px]">{part.name}</td>
            <td className="text-right">{part.qty} часть</td>
            <td className="whitespace-nowrap text-right">€ {part.price}</td>
            <td className="pb-1 pl-[11px] pt-[5px]">
              <div className="flex gap-3">
                <RowButton label="Увеличить"><ZoomInIcon className="h-[14px] w-[14px]" /></RowButton>
                {!part.noCart && <RowButton label="В корзину"><CartIcon className="mt-1 h-4 w-4" /></RowButton>}
              </div>
            </td>
          </tr>
        ))}
      </tbody>
    </table>
  )
}

function ScrollBar() {
  return (
    <div className="ml-[2px] flex w-6 flex-col items-center bg-[#f1f1f1]">
      <svg className="my-2 h-2 w-3" viewBox="0 0 12 8"><path d="M6 1l5.500 6H.5z" fill="#505050" /></svg>
      <div className="grow-43" />
      <div className="w-[21px] grow-91 bg-[#c1c1c1]" />
      <div className="grow-18" />
      <svg className="my-2 h-2 w-3" viewBox="0 0 12 8"><path d="M6 7L.5 1h11z" fill="#505050" /></svg>
    </div>
  )
}

function PartsPanel() {
  return (
    <aside className="flex w-5/12 flex-col border-x border-t border-[#ddd] bg-white">
      <div className="flex h-11 shrink-0">
        <button className="h-full w-[399px] bg-[#0494da] pt-px font-medium text-white">Запасные части</button>
        <button className="h-full flex-1 bg-white pt-px text-[#555] shadow-[inset_0_-4px_12px_#bbb]">аксессуары</button>
      </div>
      <div className="flex h-[67px] shrink-0 items-center border-b border-[#b8dff2] bg-[#0494da] pl-[17px] pr-5 text-white">
        <div>
          <h1 className="text-base/[22px] font-bold">0005446556</h1>
          <p className="text-sm/[22px] font-medium">лопата</p>
        </div>
        <button aria-label="Видео" className="ml-auto"><BsFilm size={36} /></button>
        <button aria-label="Печать" className="ml-2"><MdPrint size={36} /></button>
      </div>
      <div className="flex min-h-0 pb-[5px]">
        <div className="min-w-0 flex-1">
          <PartsTable />
        </div>
        <ScrollBar />
      </div>
    </aside>
  )
}

function BottomBar() {
  const items = [
    { label: 'Главная', width: 'w-8', vb: '0 0 32 32', icon: <path d="M0 15L16 1l6 5V3h4v6l6 6zM3 16h26v13q0 2-2 2h-7v-7h-8v7H5q-2 0-2-2z" /> },
    { label: 'Вверх', width: 'w-6', vb: '0 0 24 32', icon: <path d="M12 4l12 12h-7v11q0 2-2 2H9q-2 0-2-2V16H0z" /> },
    { label: 'Назад', width: 'w-[26px]', vb: '0 0 26 32', icon: <path d="M0 16L12 5v6h12q2 0 2 2v6q0 2-2 2H12v6z" /> },
    { label: 'Вперёд', width: 'w-[26px]', vb: '0 0 26 32', icon: <path d="M26 16L14 5v6H2q-2 0-2 2v6q0 2 2 2h12v6z" /> },
    {
      label: 'Дерево', width: 'w-7', vb: '0 0 28 32',
      icon: (
        <>
          <rect y="2" width="18" height="8" rx="1.500" />
          <rect x="15" y="14" width="13" height="6" rx="1" />
          <rect x="15" y="24" width="13" height="6" rx="1" />
          <path d="M9 9v18h7M9 17h7" fill="none" stroke="#111" />
        </>
      ),
    },
    {
      label: 'Миниатюры', width: 'w-[30px]', vb: '0 0 30 32',
      icon: (
        <>
          <rect x="4" y="1" width="22" height="16" rx="3" />
          <path d="M6 3h18v7l-1.500-2-1 4-2-4-1.500 3-2-4-2 4-2-3-2 4-2-1-2 2z" fill="#fff" />
          <path d="M0 19h30" stroke="#777" strokeWidth="1.500" />
          <path d="M5 22.500h20M5 26h20M5 29.500h20" stroke="#111" strokeWidth="1.500" />
        </>
      ),
    },
    {
      label: 'VR', width: 'w-[35px]', vb: '0 0 35 32',
      icon: (
        <>
          <path d="M1 8l23-3 9 3v14l-9 3-5-1-4-6h-2l-4 5-8-1z" />
          <ellipse cx="6" cy="14.500" rx="3" ry="4.500" fill="#fff" />
          <ellipse cx="18" cy="14.500" rx="3.500" ry="5" fill="#fff" />
          <path d="M24.500 5.500v19" stroke="#999" />
          <path d="M33 12h-3v5h3" fill="none" stroke="#fff" />
        </>
      ),
    },
  ]

  return (
    <footer className="flex h-11 shrink-0 items-center justify-center border-t border-[#e5e5e5] bg-white">
      {items.map((item) => (
        <button key={item.label} aria-label={item.label} className="flex w-[55px] justify-center drop-shadow-sm">
          <svg className={`h-8 ${item.width}`} viewBox={item.vb}>{item.icon}</svg>
        </button>
      ))}
    </footer>
  )
}

export default function App() {
  return (
    <div className="flex min-h-screen flex-col bg-white font-[Roboto,sans-serif] text-base">
      <BrowserChrome />
      <SiteNav />
      <Breadcrumbs />
      <main className="flex flex-1">
        <Viewer />
        <PartsPanel />
      </main>
      <BottomBar />
    </div>
  )
}
